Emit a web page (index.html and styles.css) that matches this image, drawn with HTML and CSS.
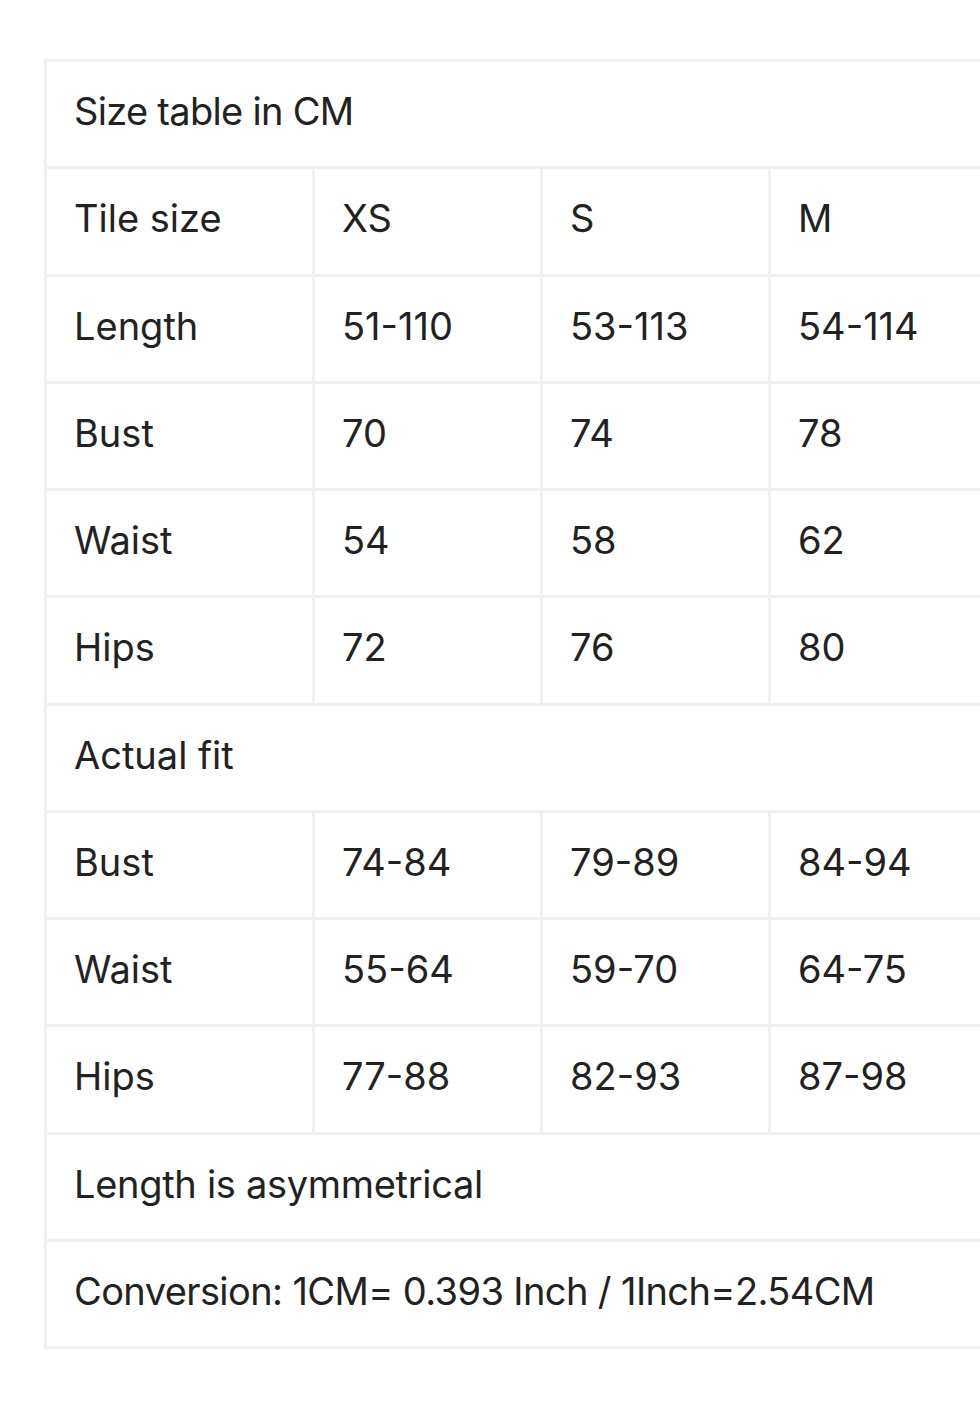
FILE: index.html
```html
<!DOCTYPE html>
<html lang="en">
<head>
<meta charset="utf-8">
<title>Size table</title>
<link rel="stylesheet" href="styles.css">
</head>
<body>
<div class="wrap">
<table class="sizes">
  <colgroup>
    <col class="c-label"><col class="c-size"><col class="c-size"><col class="c-size">
  </colgroup>
  <tbody>
    <tr><td colspan="4" class="title">Size table in CM</td></tr>
    <tr><td>Tile size</td><td>XS</td><td>S</td><td>M</td></tr>
    <tr><td>Length</td><td>51-110</td><td>53-113</td><td>54-114</td></tr>
    <tr><td>Bust</td><td>70</td><td>74</td><td>78</td></tr>
    <tr><td>Waist</td><td>54</td><td>58</td><td>62</td></tr>
    <tr><td>Hips</td><td>72</td><td>76</td><td>80</td></tr>
    <tr><td colspan="4">Actual fit</td></tr>
    <tr><td>Bust</td><td>74-84</td><td>79-89</td><td>84-94</td></tr>
    <tr><td>Waist</td><td>55-64</td><td>59-70</td><td>64-75</td></tr>
    <tr><td>Hips</td><td>77-88</td><td>82-93</td><td>87-98</td></tr>
    <tr><td colspan="4" class="note">Length is asymmetrical</td></tr>
    <tr><td colspan="4" class="narrow">Conversion: 1CM= 0.393 Inch / 1Inch=2.54CM</td></tr>
  </tbody>
</table>
</div>
</body>
</html>
```
FILE: styles.css
```css
html, body {
  margin: 0;
  padding: 0;
  background: #ffffff;
  overflow: hidden;
}

.wrap {
  padding: 59px 0 0 44px;
  width: 1100px;
}

.sizes {
  border-collapse: collapse;
  table-layout: fixed;
  width: 954px;
  font-family: "Inter", "Liberation Sans", sans-serif;
  font-size: 38px;
  color: #222222;
}

.c-label { width: 268px; }
.c-size { width: 228px; }

.sizes td {
  border: 3px solid #f0f0f0;
  height: 107.25px;
  padding: 0 0 6px 27px;
  box-sizing: border-box;
  vertical-align: middle;
  white-space: nowrap;
}

.sizes td.title {
  letter-spacing: -0.7px;
}

.sizes td.note {
  letter-spacing: -0.3px;
}

.sizes td.narrow {
  letter-spacing: -0.6px;
}
```
